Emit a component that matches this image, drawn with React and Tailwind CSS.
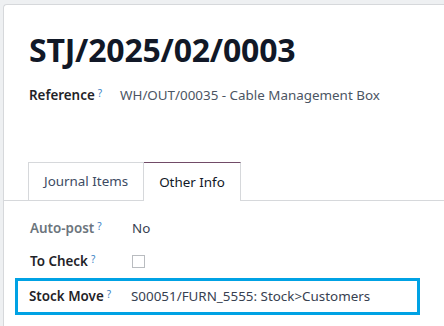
import React from 'react';

const Help = () => (
    <sup className="ml-[3px] text-[10px] font-normal text-[#3b82c4] relative -top-[3px]">?</sup>
);

const Field = ({ label, muted, children }) => (
    <div className="flex items-center h-[33px]">
        <div className={`w-[102px] shrink-0 font-semibold ${muted ? 'text-[#6c757d]' : 'text-[#1f2328]'}`}>
            {label}
            <Help />
        </div>
        <div className="text-[#374151]">{children}</div>
    </div>
);

const App = () => {
    return (
        <div
            className="w-[444px] h-[326px] overflow-hidden bg-[#eef0f2] pt-[4px] pl-[3px] text-[13.4px]"
            style={{ fontFamily: '"Noto Sans", "Open Sans", sans-serif' }}
        >
            <div className="h-[400px] bg-white border-l border-t border-[#d6d8db] rounded-tl-[4px]">
                <div className="pl-[25px] pt-[25px]">
                    <h1 className="text-[32px] leading-[40px] font-bold text-[#111827] tracking-[-0.2px]">
                        STJ/2025/02/0003
                    </h1>
                    <div className="flex items-center h-[30px] mt-[10px]">
                        <div className="w-[91px] shrink-0 font-semibold text-[#1f2328]">
                            Reference
                            <Help />
                        </div>
                        <div className="text-[#4b5563]">WH/OUT/00035 - Cable Management Box</div>
                    </div>
                </div>

                {/* tabs */}
                <div className="mt-[52px] flex border-b border-[#d6d8db] pl-[24px]">
                    <div className="h-[38px] px-[15px] flex items-center border border-b-0 border-[#d6d8db] text-[#3d4b63] -mb-px">
                        Journal Items
                    </div>
                    <div className="h-[39px] px-[15px] flex items-center border border-b-0 border-l-0 border-[#d6d8db] border-t-[#714b67] bg-white text-[#111827] -mb-px">
                        Other Info
                    </div>
                </div>

                <div className="pl-[26px] pt-[11px]">
                    <Field label="Auto-post" muted>No</Field>
                    <Field label="To Check">
                        <div className="w-[13px] h-[13px] border border-[#b9bcc0] bg-white" />
                    </Field>
                </div>
                <div className="ml-[11px] w-[405px] border-[3px] border-[#00a2e4] pl-[11px] h-[37px] flex items-center">
                    <div className="w-[102px] shrink-0 font-semibold text-[#1f2328]">
                        Stock Move
                        <Help />
                    </div>
                    <div className="text-[#374151]">S00051/FURN_5555: Stock&gt;Customers</div>
                </div>
            </div>
        </div>
    );
};

export default App;
